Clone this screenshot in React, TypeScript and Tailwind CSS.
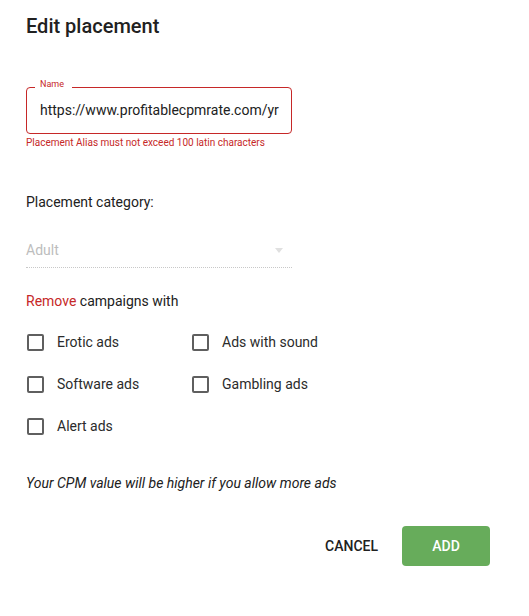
import { useState } from 'react'

const options = [
  ['Erotic ads', 'Ads with sound'],
  ['Software ads', 'Gambling ads'],
  ['Alert ads'],
]

function Check({ label }: { label: string }) {
  const [checked, setChecked] = useState(false)
  return (
    <label className="flex h-[42px] w-[165px] cursor-pointer items-center" onClick={() => setChecked(!checked)}>
      <span className={`box-border h-[17px] w-[17px] rounded-[2px] border-2 ${checked ? 'border-[#67ac5b] bg-[#67ac5b]' : 'border-[#5f5f5f]'}`} />
      <span className="ml-[13px] text-[14px] leading-5 text-[#2b2b2b]">{label}</span>
    </label>
  )
}

export default function App() {
  return (
    <div className="min-h-[616px] w-[529px] bg-white pl-[26px] pt-3 text-[#212121]" style={{ fontFamily: 'Roboto, "Liberation Sans", sans-serif' }}>
      <h1 className="text-[20px] font-medium leading-7">Edit placement</h1>

      <div className="relative mt-[47px] h-[47px] w-[266px] rounded-[4px] border border-[#c62828]">
        <span className="absolute -top-[9px] left-[8px] bg-white pl-[5px] pr-[8px] text-[9px] leading-[10px] text-[#c62828]">
          Name
        </span>
        <div className="overflow-hidden whitespace-nowrap pl-[13px] pr-[8px] pt-[12px] text-[14px] leading-5">
          https://www.profitablecpmrate.com/yr
        </div>
      </div>
      <p className="mt-[2px] text-[10px] leading-[14px] text-[#c62828]">Placement Alias must not exceed 100 latin characters</p>

      <p className="mt-[42px] text-[14px] leading-5">Placement category:</p>

      <div className="mt-[28px] flex w-[266px] items-center justify-between border-b border-dotted border-[#c8c8c8] pb-[7px]">
        <span className="text-[14px] leading-5 text-[#bdbdbd]">Adult</span>
        <svg className="mr-[9px]" width="8" height="5" viewBox="0 0 8 5">
          <path d="M0 0h8L4 5z" fill="#e0e0e0" />
        </svg>
      </div>

      <p className="mt-[23px] text-[14px] leading-5">
        <span className="text-[#c62828]">Remove</span> campaigns with
      </p>

      <div className="ml-[1px] mt-[10px]">
        {options.map((row, i) => (
          <div key={i} className="flex">
            {row.map((o) => (
              <Check key={o} label={o} />
            ))}
          </div>
        ))}
      </div>

      <p className="mt-[26px] text-[14px] italic leading-5">Your CPM value will be higher if you allow more ads</p>

      <div className="mt-[33px] flex justify-end gap-2 pr-[39px]">
        <button className="h-[40px] rounded px-4 text-[14px] font-medium text-[#212121]">CANCEL</button>
        <button className="h-[40px] w-[88px] rounded-[4px] bg-[#67ac5b] text-[14px] font-medium text-white">ADD</button>
      </div>
    </div>
  )
}
